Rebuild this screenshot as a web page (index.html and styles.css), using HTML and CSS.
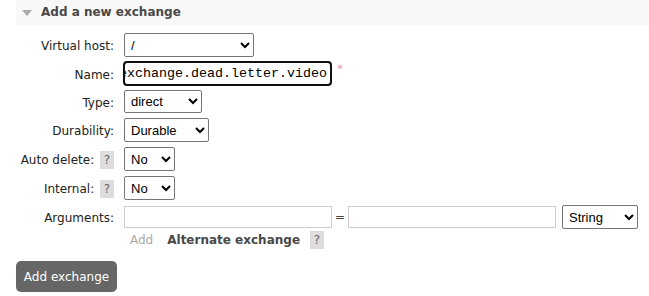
FILE: index.html
```html
<!DOCTYPE html>
<html lang="en">

<head>
    <meta charset="UTF-8">
    <title>Add a new exchange</title>
    <link rel="stylesheet" href="styles.css">
</head>

<body>
    <div class="section">
        <h2 class="section-title"><span class="toggle"></span>Add a new exchange</h2>

        <div class="form">
            <label class="label">Virtual host:</label>
            <div class="field">
                <select class="sel sel-vhost">
                    <option>/</option>
                </select>
            </div>

            <label class="label">Name:</label>
            <div class="field">
                <input class="name-input" type="text" value="exchange.dead.letter.video">
                <span class="mandatory">*</span>
            </div>

            <label class="label">Type:</label>
            <div class="field">
                <select class="sel sel-type">
                    <option>direct</option>
                </select>
            </div>

            <label class="label">Durability:</label>
            <div class="field">
                <select class="sel sel-durable">
                    <option>Durable</option>
                </select>
            </div>

            <label class="label">Auto delete: <span class="help">?</span></label>
            <div class="field">
                <select class="sel sel-small">
                    <option>No</option>
                </select>
            </div>

            <label class="label">Internal: <span class="help">?</span></label>
            <div class="field">
                <select class="sel sel-small">
                    <option>No</option>
                </select>
            </div>

            <label class="label">Arguments:</label>
            <div class="field field-args">
                <div class="arg-row">
                    <input class="arg-input" type="text">
                    <span class="equals">=</span>
                    <input class="arg-input" type="text">
                    <select class="sel sel-string">
                        <option>String</option>
                    </select>
                </div>
                <div class="arg-links">
                    <span class="add-link">Add</span>
                    <span class="alt-link">Alternate exchange</span>
                    <span class="help">?</span>
                </div>
            </div>
        </div>

        <button class="submit">Add exchange</button>
    </div>
</body>

</html>
```

FILE: styles.css
```css
body {
    margin: 0;
    padding: 0;
    font-family: "DejaVu Sans", Verdana, sans-serif;
    font-size: 12px;
    color: #484848;
    background: #fff;
}

.section {
    padding-left: 16px;
}

.section-title {
    margin: 0;
    height: 25px;
    line-height: 25px;
    background: #f8f8f8;
    font-size: 12px;
    font-weight: bold;
    color: #484848;
    display: flex;
    align-items: center;
}

.toggle {
    width: 0;
    height: 0;
    border-left: 5px solid transparent;
    border-right: 5px solid transparent;
    border-top: 6px solid #aaa;
    margin-left: 6px;
    margin-right: 9px;
}

/* form grid: labels right aligned, fields on the right */
.form {
    display: grid;
    grid-template-columns: 98px auto;
    column-gap: 10px;
    row-gap: 5px;
    margin-top: 8px;
    align-items: start;
}

.label {
    text-align: right;
    padding-top: 6px;
    color: #222;
}

.help {
    display: inline-block;
    background: #ddd;
    color: #666;
    width: 14px;
    height: 18px;
    line-height: 18px;
    text-align: center;
    margin-left: 2px;
}

.label .help {
    margin-top: -2px;
    vertical-align: top;
}

.field {
    display: flex;
    align-items: flex-start;
}

.field-args {
    flex-direction: column;
}

.sel {
    font-family: "Liberation Sans", Arial, sans-serif;
    font-size: 13px;
    height: 24px;
    border: 1px solid #767676;
    border-radius: 2px;
    background: #fff;
    color: #000;
    padding: 0 2px;
}

.sel-vhost { width: 130px; }
.sel-type { width: 78px; height: 23px; }
.sel-durable { width: 85px; }
.sel-small { width: 51px; }
.sel-string { width: 76px; margin-left: 6px; }

.name-input {
    width: 207px;
    height: 23px;
    box-sizing: border-box;
    font-family: "Liberation Mono", "Courier New", monospace;
    font-size: 13.33px;
    border: 1px solid #767676;
    border-radius: 3px;
    padding: 1px 0;
    text-indent: -6px;
    outline: 2px solid #101010;
    outline-offset: -1px;
}

.mandatory {
    color: #f09a9a;
    margin-left: 6px;
    font-size: 12px;
    line-height: 14px;
}

.arg-row {
    display: flex;
    align-items: center;
}

.arg-input {
    width: 208px;
    height: 22px;
    box-sizing: border-box;
    border: 1px solid #ccc;
    padding: 1px 2px;
}

.equals {
    width: 16px;
    text-align: center;
    color: #444;
}

.arg-links {
    display: flex;
    align-items: center;
    margin-top: 2px;
    padding-left: 6px;
}

.add-link {
    color: #aaa;
    margin-right: 14px;
}

.alt-link {
    font-weight: bold;
    color: #484848;
    margin-right: 8px;
}

.submit {
    margin-top: 12px;
    background: #666;
    color: #fff;
    border: none;
    border-radius: 5px;
    font-family: "DejaVu Sans", Verdana, sans-serif;
    font-size: 12px;
    width: 101px;
    height: 31px;
    padding: 0;
}
```
